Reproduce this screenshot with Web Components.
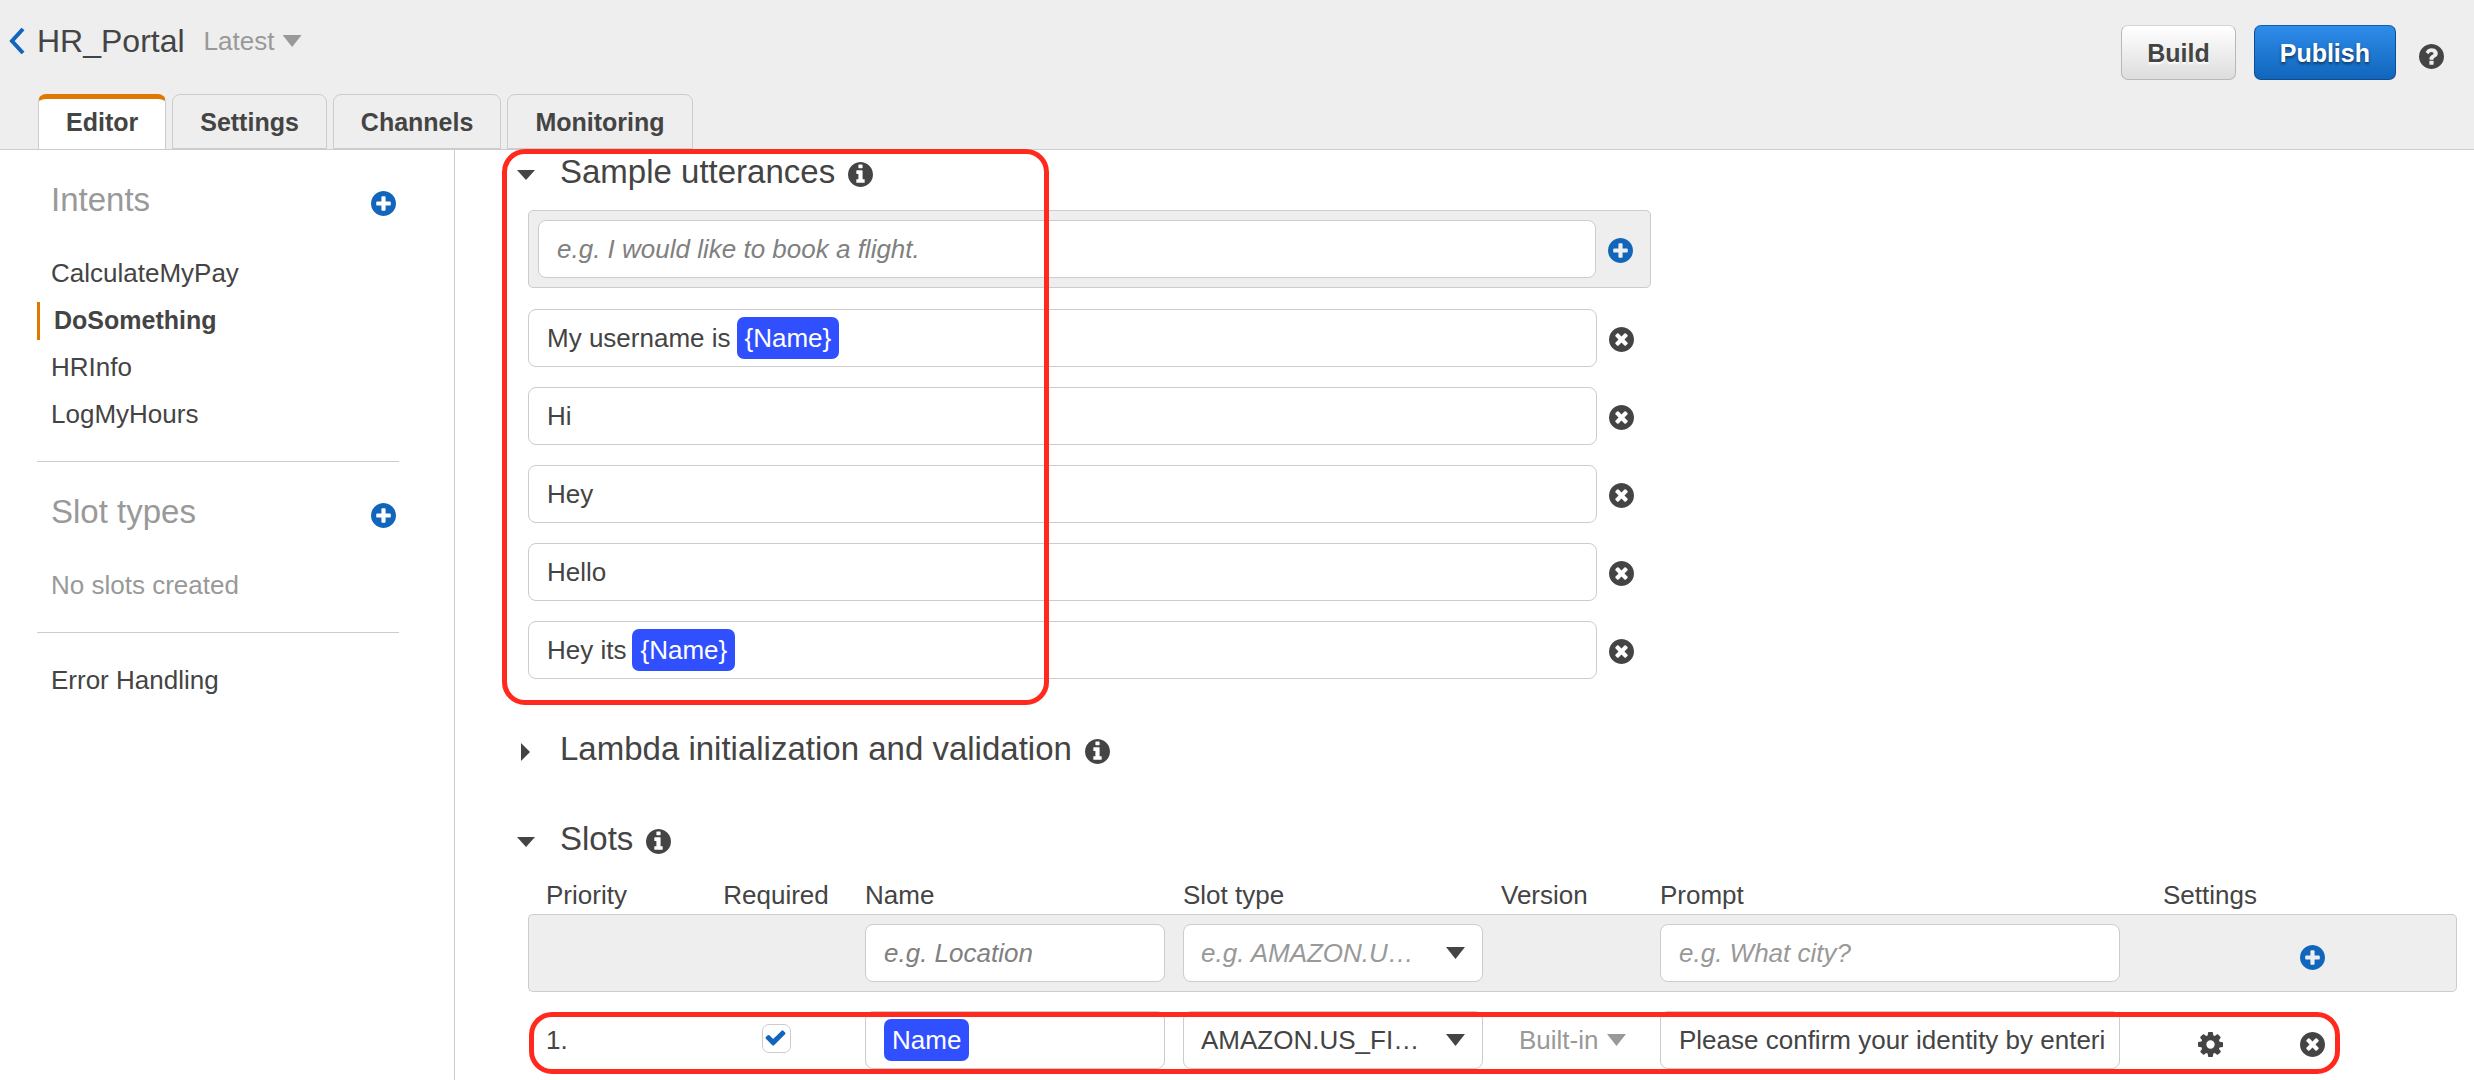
<!DOCTYPE html>
<html lang="en">
<head>
<meta charset="utf-8">
<meta name="viewport" content="width=device-width, initial-scale=1">
<title>HR_Portal - Editor</title>
<style>
  :root {
    --text: #444;
    --muted: #999;
    --line: #ccc;
    --panel: #eee;
    --blue: #1166bb;
    --orange: #e07700;
    --chip: #304ffe;
    --mark: #ff2a1d;
  }
  html, body { height: 100%; }
  body {
    margin: 0;
    overflow: hidden;
    background: #fff;
    color: var(--text);
    font: 26px/32px "Liberation Sans", Arial, sans-serif;
  }
</style>
</head>
<body>
<bot-app></bot-app>

<script>
const define = (name, html, setup) => {
  const template = document.createElement('template');
  template.innerHTML = html;
  customElements.define(name, class extends HTMLElement {
    connectedCallback() {
      if (this.shadowRoot) return;
      const root = this.attachShadow({ mode: 'open' });
      root.append(template.content.cloneNode(true));
      if (setup) setup(this, root);
    }
  });
};

const DISC = 'm320-64q0 209-103 385.5t-279.5 279.5-385.5 103-385.5-103-279.5-279.5-103-385.5 103-385.5 279.5-279.5 385.5-103 385.5 103 279.5 279.5 103 385.5z';
const CIRCLE = 'M1536 768q0 209-103 385.5t-279.5 279.5-385.5 103-385.5-103-279.5-279.5-103-385.5 103-385.5 279.5-279.5 385.5-103 385.5 103 279.5 279.5 103 385.5z';
const ICONS = {
  plus: 'M1216 832v-128q0-26-19-45t-45-19h-256v-256q0-26-19-45t-45-19h-128q-26 0-45 19t-19 45v256h-256q-26 0-45 19t-19 45v128q0 26 19 45t45 19h256v256q0 26 19 45t45 19h128q26 0 45-19t19-45v-256h256q26 0 45-19t19-45z' + DISC,
  remove: 'M1149 994q0-26-19-45l-181-181 181-181q19-19 19-45 0-27-19-46l-90-90q-19-19-46-19-26 0-45 19l-181 181-181-181q-19-19-45-19-27 0-46 19l-90 90q-19 19-19 46 0 26 19 45l181 181-181 181q-19 19-19 45 0 27 19 46l90 90q19 19 46 19 26 0 45-19l181-181 181 181q19 19 45 19 27 0 46-19l90-90q19-19 19-46z' + CIRCLE,
  info: 'M1024 1248v-160q0-14-9-23t-23-9h-96v-512q0-14-9-23t-23-9h-320q-14 0-23 9t-9 23v160q0 14 9 23t23 9h96v320h-96q-14 0-23 9t-9 23v160q0 14 9 23t23 9h448q14 0 23-9t9-23zm-128-896v-160q0-14-9-23t-23-9h-192q-14 0-23 9t-9 23v160q0 14 9 23t23 9h192q14 0 23-9t9-23z' + CIRCLE,
  help: 'M896 1248v-192q0-14-9-23t-23-9h-192q-14 0-23 9t-9 23v192q0 14 9 23t23 9h192q14 0 23-9t9-23zm256-672q0-88-55.5-163t-138.5-116-170-41q-243 0-371 213-15 24 8 42l132 100q7 6 19 6 16 0 25-12 53-68 86-92 34-24 86-24 48 0 85.5 26t37.5 59q0 38-20 61t-68 45q-63 28-115.5 86.5t-52.5 125.5v36q0 14 9 23t23 9h192q14 0 23-9t9-23q0-19 21.5-49.5t54.5-49.5q32-18 49-28.5t46-35 44.5-48 28-60.5 12.5-81z' + CIRCLE,
  gear: 'M1024 768q0-106-75-181t-181-75-181 75-75 181 75 181 181 75 181-75 75-181zm512-109v222q0 12-8 23t-20 13l-185 28q-19 54-39 91 35 50 107 138 10 12 10 25t-9 23q-27 37-99 108t-94 71q-12 0-26-9l-138-108q-44 23-91 38-16 136-29 186-7 28-36 28h-222q-14 0-24.5-8.5t-11.5-21.5l-28-184q-49-16-90-37l-141 107q-10 9-25 9-14 0-25-11-126-114-165-168-7-10-7-23 0-12 8-23 15-21 51-66.5t54-70.5q-27-50-41-99l-183-27q-13-2-21-12.5t-8-23.5v-222q0-12 8-23t19-13l186-28q14-46 39-92-40-57-107-138-10-12-10-24 0-10 9-23 26-36 98.5-107.5t94.500-71.500q13 0 26 10l138 107q44-23 91-38 16-136 29-186 7-28 36-28h222q14 0 24.500 8.500t11.500 21.500l28 184q49 16 90 37l142-107q9-9 24-9 13 0 25 10 129 119 165 170 7 8 7 22 0 12-8 23-15 21-51 66.500t-54 70.500q26 50 41 98l183 28q13 2 21 12.500t8 23.500z'
};

/* Round icon button: <icon-button icon="plus" label="Add"> */
define('icon-button', `
  <style>
    :host { display: inline-flex; color: var(--text); }
    :host([icon="plus"]) { color: var(--blue); }
    button { display: block; width: 25px; height: 25px; padding: 0; border: 0; background: none; color: inherit; cursor: pointer; }
    svg { display: block; width: 25px; height: 25px; fill: currentColor; fill-rule: evenodd; }
  </style>
  <button type="button"><svg viewBox="0 0 1536 1536" aria-hidden="true"><path/></svg></button>
`, (host, root) => {
  root.querySelector('path').setAttribute('d', ICONS[host.getAttribute('icon')]);
  root.querySelector('button').setAttribute('aria-label', host.getAttribute('label'));
});

/* Blue token for a slot name */
define('slot-chip', `
  <style>
    :host { display: inline-block; padding: 0 8px; border-radius: 7px; background: var(--chip); color: #fff; line-height: 42px; }
  </style>
  <slot></slot>
`);

/* Text field; slotted content replaces the plain input */
define('text-field', `
  <style>
    :host { display: block; min-width: 0; }
    input, .rich {
      box-sizing: border-box; display: block; width: 100%; height: 58px; margin: 0; padding: 0 12px 0 18px;
      border: 1px solid var(--line); border-radius: 8px; background: #fff; color: inherit; font: inherit; outline: 0;
    }
    .rich { display: flex; align-items: center; gap: 6px; white-space: nowrap; overflow: hidden; }
    input::placeholder { color: #808080; font-style: italic; opacity: 1; }
    :host([light]) input::placeholder { color: var(--muted); }
  </style>
`, (host, root) => {
  const rich = host.childNodes.length > 0;
  const field = document.createElement(rich ? 'div' : 'input');
  field.setAttribute('aria-label', host.getAttribute('label'));
  if (rich) {
    field.className = 'rich';
    field.setAttribute('role', 'textbox');
    field.tabIndex = 0;
    field.append(document.createElement('slot'));
  } else {
    field.type = 'text';
    field.value = host.getAttribute('value') || '';
    field.placeholder = host.getAttribute('placeholder') || '';
  }
  root.append(field);
});

/* Drop-down, framed or plain */
define('drop-down', `
  <style>
    :host { display: block; min-width: 0; }
    label { display: grid; grid-template-columns: 1fr auto; align-items: center; }
    select {
      grid-area: 1 / 1 / 2 / 3; box-sizing: border-box; width: 100%; height: 58px; margin: 0; padding: 0 52px 0 17px;
      appearance: none; border: 1px solid var(--line); border-radius: 8px; background: #fff; color: inherit; font: inherit; outline: 0;
    }
    i { grid-area: 1 / 2; width: 19px; height: 12px; margin-right: 18px; background: currentColor; clip-path: polygon(0 0, 100% 0, 50% 100%); pointer-events: none; z-index: 1; }
    :host([empty]) select { color: var(--muted); font-style: italic; }
    :host([empty]) i { color: var(--text); }
    :host([plain]) { display: inline-block; color: var(--muted); }
    :host([plain]) select { width: auto; height: 32px; padding: 0 27px 0 0; border: 0; background: none; }
    :host([plain]) i { margin: 0; }
  </style>
  <label><select><option></option></select><i></i></label>
`, (host, root) => {
  root.querySelector('option').textContent = host.getAttribute('value');
  root.querySelector('select').setAttribute('aria-label', host.getAttribute('label'));
});

define('check-box', `
  <style>
    :host { display: inline-block; }
    label { display: grid; width: 29px; height: 29px; }
    input { grid-area: 1 / 1; box-sizing: border-box; width: 29px; height: 29px; margin: 0; appearance: none; border: 1px solid var(--line); border-radius: 7px; background: #fff; }
    svg { grid-area: 1 / 1; margin: 2px; width: 23px; height: 23px; fill: var(--blue); pointer-events: none; visibility: hidden; }
    input:checked + svg { visibility: visible; }
  </style>
  <label><input type="checkbox" aria-label="Required" checked>
    <svg viewBox="0 0 1792 1792" aria-hidden="true"><path d="M1671 566q0 40-28 68l-724 724-136 136q-28 28-68 28t-68-28l-136-136-362-362q-28-28-28-68t28-68l136-136q28-28 68-28t68 28l294 295 656-657q28-28 68-28t68 28l136 136q28 28 28 68z"/></svg>
  </label>
`);

/* Red callout laid over the content it points at */
define('callout-frame', `
  <style>
    :host { position: absolute; z-index: 5; box-sizing: border-box; border: 5px solid var(--mark); border-radius: 23px; pointer-events: none; }
  </style>
`);

define('push-button', `
  <style>
    :host { display: block; }
    button {
      height: 55px; padding: 0 25px; border: 1px solid #b8b8b8; border-top-color: #d5d5d5; border-radius: 7px;
      background: linear-gradient(#fff, #ddd); color: var(--text); font: bold 25px/32px "Liberation Sans", Arial, sans-serif;
      text-shadow: 0 2px 2px #fff; cursor: pointer;
    }
    :host([primary]) button {
      border-color: #0d4d91; border-top-color: #1160b0;
      background: linear-gradient(#2e8cea, #1166bb); color: #fff; text-shadow: 0 2px 3px #0008;
    }
  </style>
  <button type="button"><slot></slot></button>
`);

define('tab-item', `
  <style>
    :host { display: block; }
    a {
      box-sizing: border-box; display: block; height: 55px; padding: 0 27px; border: 1px solid var(--line); border-radius: 8px 8px 0 0;
      color: var(--text); font-size: 25px; font-weight: bold; line-height: 54px; text-decoration: none;
    }
    :host([current]) a { border-top: 5px solid var(--orange); border-bottom: 0; background: #fff; line-height: 46px; }
  </style>
  <a href="#"><slot></slot></a>
`, (host, root) => { if (host.hasAttribute('current')) root.querySelector('a').setAttribute('aria-current', 'page'); });

define('app-header', `
  <style>
    :host { display: flex; justify-content: space-between; background: var(--panel); border-bottom: 1px solid var(--line); }
    .left { padding-top: 21px; }
    .title { display: flex; align-items: center; padding-left: 9px; }
    .back { display: block; width: 16px; height: 26px; margin-right: 12px; }
    .back svg { display: block; fill: none; stroke: var(--blue); stroke-width: 4; }
    h1 { margin: 0 19px 0 0; font-size: 32px; line-height: 40px; font-weight: normal; }
    nav { display: flex; gap: 6px; margin: 33px 0 0 38px; }
    .actions { display: flex; align-items: flex-start; gap: 18px; padding: 25px 30px 0 0; }
    icon-button { margin: 19px 0 0 5px; }
  </style>
  <div class="left">
    <div class="title">
      <a class="back" href="#" aria-label="Back"><svg width="16" height="26" viewBox="0 0 16 26"><path d="M14 1 3 13l11 12"/></svg></a>
      <h1>HR_Portal</h1>
      <drop-down plain label="Version" value="Latest"></drop-down>
    </div>
    <nav>
      <tab-item current>Editor</tab-item><tab-item>Settings</tab-item><tab-item>Channels</tab-item><tab-item>Monitoring</tab-item>
    </nav>
  </div>
  <div class="actions">
    <push-button>Build</push-button>
    <push-button primary>Publish</push-button>
    <icon-button icon="help" label="Help"></icon-button>
  </div>
`);

define('nav-item', `
  <style>
    :host { display: block; line-height: 47px; }
    a { display: flex; align-items: center; padding-left: 14px; color: inherit; text-decoration: none; }
    :host([current]) a { font-size: 25px; font-weight: bold; }
    :host([current]) a::before { content: ""; width: 3px; height: 38px; margin: 0 14px 0 -14px; background: var(--orange); }
  </style>
  <a href="#"><slot></slot></a>
`);

define('side-bar', `
  <style>
    :host { display: block; box-sizing: border-box; width: 455px; flex: none; padding: 0 55px 0 37px; border-right: 1px solid var(--line); }
    .head { display: flex; justify-content: space-between; align-items: center; padding: 30px 3px 30px 14px; color: var(--muted); }
    h2 { margin: 0; font-size: 33px; line-height: 40px; font-weight: normal; }
    icon-button { margin-top: 6px; }
    section { padding-bottom: 23px; border-bottom: 1px solid var(--line); }
    p { margin: 0; padding-left: 14px; line-height: 47px; color: var(--muted); }
    .last { margin-top: 24px; }
  </style>
  <section>
    <div class="head"><h2>Intents</h2><icon-button icon="plus" label="Add intent"></icon-button></div>
    <nav-item>CalculateMyPay</nav-item>
    <nav-item current>DoSomething</nav-item>
    <nav-item>HRInfo</nav-item>
    <nav-item>LogMyHours</nav-item>
  </section>
  <section>
    <div class="head"><h2>Slot types</h2><icon-button icon="plus" label="Add slot type"></icon-button></div>
    <p>No slots created</p>
  </section>
  <nav-item class="last">Error Handling</nav-item>
`);

/* Collapsible heading with an info icon */
define('section-heading', `
  <style>
    :host { display: flex; align-items: center; }
    .toggle { display: flex; align-items: center; width: 43px; height: 40px; padding: 0; border: 0; background: none; color: inherit; }
    .toggle::before { content: ""; width: 18px; height: 10px; margin-top: 6px; background: currentColor; clip-path: polygon(0 0, 100% 0, 50% 100%); }
    :host([collapsed]) .toggle::before { width: 9px; height: 18px; margin-left: 4px; clip-path: polygon(0 0, 100% 50%, 0 100%); }
    h2 { margin: 0 13px 0 0; font-size: 33px; line-height: 40px; font-weight: normal; }
    icon-button { margin-top: 5px; }
  </style>
  <button class="toggle" type="button" aria-label="Toggle section"></button>
  <h2><slot></slot></h2>
  <icon-button icon="info" label="More information"></icon-button>
`);

define('utterance-row', `
  <style>
    :host { display: grid; grid-template-columns: 1fr 42px; align-items: center; column-gap: 12px; }
    :host([new]) { border: 1px solid var(--line); border-radius: 5px; background: var(--panel); padding: 9px 0 9px 9px; }
    ::slotted(icon-button) { margin-top: 2px; }
  </style>
  <slot></slot>
`);

define('utterance-list', `
  <style>
    :host { display: block; position: relative; }
    .rows { display: flex; flex-direction: column; gap: 20px; max-width: 1123px; margin: 18px 0 0 11px; }
    .rows utterance-row:first-child { margin-bottom: 1px; }
    callout-frame { left: -15px; top: -3px; width: 547px; height: 556px; }
  </style>
  <section-heading>Sample utterances</section-heading>
  <div class="rows">
    <utterance-row new><text-field label="New utterance" placeholder="e.g. I would like to book a flight."></text-field><icon-button icon="plus" label="Add utterance"></icon-button></utterance-row>
    <utterance-row><text-field label="Utterance"><span>My username is</span><slot-chip>{Name}</slot-chip></text-field><icon-button icon="remove" label="Remove"></icon-button></utterance-row>
    <utterance-row><text-field label="Utterance" value="Hi"></text-field><icon-button icon="remove" label="Remove"></icon-button></utterance-row>
    <utterance-row><text-field label="Utterance" value="Hey"></text-field><icon-button icon="remove" label="Remove"></icon-button></utterance-row>
    <utterance-row><text-field label="Utterance" value="Hello"></text-field><icon-button icon="remove" label="Remove"></icon-button></utterance-row>
    <utterance-row><text-field label="Utterance"><span>Hey its</span><slot-chip>{Name}</slot-chip></text-field><icon-button icon="remove" label="Remove"></icon-button></utterance-row>
  </div>
  <callout-frame></callout-frame>
`);

define('slot-table', `
  <style>
    :host { display: block; position: relative; margin-left: 11px; }
    table { width: 100%; table-layout: fixed; border-spacing: 0; }
    th, td { padding: 0 0 0 18px; text-align: left; font-weight: normal; vertical-align: middle; }
    th { height: 52px; padding-bottom: 3px; vertical-align: bottom; }
    .mid { text-align: center; }
    .new td { height: 58px; padding-top: 9px; padding-bottom: 9px; background: var(--panel); border: solid var(--line); border-width: 1px 0; }
    .new td:first-child { border-left-width: 1px; border-radius: 5px 0 0 5px; }
    .new td:last-child { border-right-width: 1px; border-radius: 0 5px 5px 0; }
    .row td { padding-top: 19px; }
    .row .version { padding-left: 36px; }
    icon-button, check-box { vertical-align: middle; }
    icon-button { margin-top: 5px; }
    check-box { margin-bottom: 4px; }
    callout-frame { left: 1px; top: 153px; right: 117px; height: 62px; }
  </style>
  <table>
    <colgroup>
      <col style="width:159px"><col style="width:160px"><col style="width:318px"><col style="width:318px">
      <col style="width:159px"><col><col style="width:162px"><col style="width:175px">
    </colgroup>
    <thead><tr>
      <th>Priority</th><th class="mid">Required</th><th>Name</th><th>Slot type</th><th>Version</th><th>Prompt</th><th class="mid">Settings</th><th></th>
    </tr></thead>
    <tbody>
      <tr class="new">
        <td></td><td></td>
        <td><text-field label="Name" placeholder="e.g. Location"></text-field></td>
        <td><drop-down empty label="Slot type" value="e.g. AMAZON.U…"></drop-down></td>
        <td></td>
        <td><text-field light label="Prompt" placeholder="e.g. What city?"></text-field></td>
        <td></td>
        <td><icon-button icon="plus" label="Add slot"></icon-button></td>
      </tr>
      <tr class="row">
        <td>1.</td>
        <td class="mid"><check-box></check-box></td>
        <td><text-field label="Name"><slot-chip>Name</slot-chip></text-field></td>
        <td><drop-down label="Slot type" value="AMAZON.US_FI…"></drop-down></td>
        <td class="version"><drop-down plain label="Version" value="Built-in"></drop-down></td>
        <td><text-field label="Prompt" value="Please confirm your identity by enteri"></text-field></td>
        <td class="mid"><icon-button icon="gear" label="Slot settings"></icon-button></td>
        <td><icon-button icon="remove" label="Remove slot"></icon-button></td>
      </tr>
    </tbody>
  </table>
  <callout-frame></callout-frame>
`);

define('intent-editor', `
  <style>
    :host { display: flex; flex-direction: column; gap: 50px; flex: 1; min-width: 0; padding: 2px 17px 0 62px; }
  </style>
  <utterance-list></utterance-list>
  <section-heading collapsed>Lambda initialization and validation</section-heading>
  <div>
    <section-heading>Slots</section-heading>
    <slot-table></slot-table>
  </div>
`);

define('bot-app', `
  <style>
    :host { display: flex; flex-direction: column; min-height: 100%; }
    main { display: flex; flex: 1; }
  </style>
  <app-header></app-header>
  <main><side-bar></side-bar><intent-editor></intent-editor></main>
`);
</script>
</body>
</html>
